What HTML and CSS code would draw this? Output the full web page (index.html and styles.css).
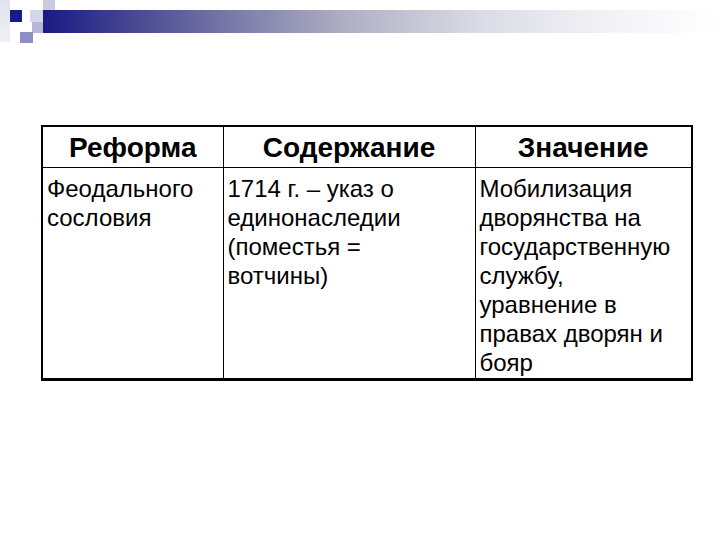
FILE: index.html
```html
<!DOCTYPE html>
<html lang="ru">
<head>
<meta charset="utf-8">
<title>Реформа</title>
<link rel="stylesheet" href="styles.css">
</head>
<body>
<div class="slide">
  <div class="deco">
    <span class="sq sq-left"></span>
    <span class="sq sq-dark"></span>
    <span class="sq sq-top"></span>
    <span class="sq sq-mid"></span>
    <span class="sq sq-low"></span>
    <span class="sq sq-bottom"></span>
    <span class="bar"></span>
  </div>
  <table class="grid">
    <colgroup>
      <col class="c1">
      <col class="c2">
      <col class="c3">
    </colgroup>
    <thead>
      <tr>
        <th>Реформа</th>
        <th>Содержание</th>
        <th>Значение</th>
      </tr>
    </thead>
    <tbody>
      <tr>
        <td>Феодального сословия</td>
        <td>1714 г. – указ о единонаследии (поместья = вотчины)</td>
        <td>Мобилизация дворянства на государственную службу, уравнение в правах дворян и бояр</td>
      </tr>
    </tbody>
  </table>
</div>
</body>
</html>
```

FILE: styles.css
```css
html, body {
  margin: 0;
  padding: 0;
  background: #ffffff;
}

.slide {
  width: 720px;
  height: 540px;
  position: relative;
  overflow: hidden;
  font-family: "Liberation Sans", Arial, sans-serif;
  color: #000000;
}

.deco {
  position: relative;
  height: 46px;
}

.sq {
  position: absolute;
  display: block;
}

.sq-left {
  left: 0;
  top: 0;
  width: 10px;
  height: 42px;
  background: linear-gradient(to bottom, #e2e2ee, #f0f0f6);
}

.sq-dark {
  left: 10px;
  top: 10px;
  width: 12px;
  height: 12px;
  background: #1a1a8e;
}

.sq-top {
  left: 43px;
  top: 0;
  width: 12px;
  height: 10px;
  background: #cacae2;
}

.sq-mid {
  left: 30px;
  top: 10px;
  width: 13px;
  height: 12px;
  background: #d6d6ea;
}

.sq-low {
  left: 32px;
  top: 22px;
  width: 11px;
  height: 11px;
  background: #b6b6d8;
}

.sq-bottom {
  left: 20px;
  top: 32px;
  width: 13px;
  height: 11px;
  background: #8e8ec6;
}

.bar {
  position: absolute;
  left: 43px;
  top: 10px;
  width: 677px;
  height: 23px;
  background: linear-gradient(to right,
    #1a1a84 0%,
    #3c3c8e 10%,
    #7a7aa8 28%,
    #b0b0c4 45%,
    #dcdce6 65%,
    #f3f3f6 84%,
    #ffffff 100%);
}

.grid {
  margin: 79px 0 0 41px;
  width: 650px;
  table-layout: fixed;
  border-collapse: collapse;
  border-top: 2px solid #000;
  border-left: 2px solid #000;
  border-right: 2px solid #000;
  border-bottom: 3px solid #000;
}

.c1 { width: 181px; }
.c2 { width: 252px; }
.c3 { width: 217px; }

.grid th,
.grid td {
  border: 1px solid #000;
  vertical-align: top;
  padding-left: 4px;
  padding-right: 10px;
}

.grid th {
  font-weight: bold;
  font-size: 28px;
  line-height: 32px;
  text-align: center;
  padding-left: 7px;
  padding-right: 7px;
  padding-top: 5px;
  padding-bottom: 3px;
}

.grid td {
  font-size: 24px;
  line-height: 29px;
  text-align: left;
  padding-top: 6px;
  padding-bottom: 1px;
}
```
